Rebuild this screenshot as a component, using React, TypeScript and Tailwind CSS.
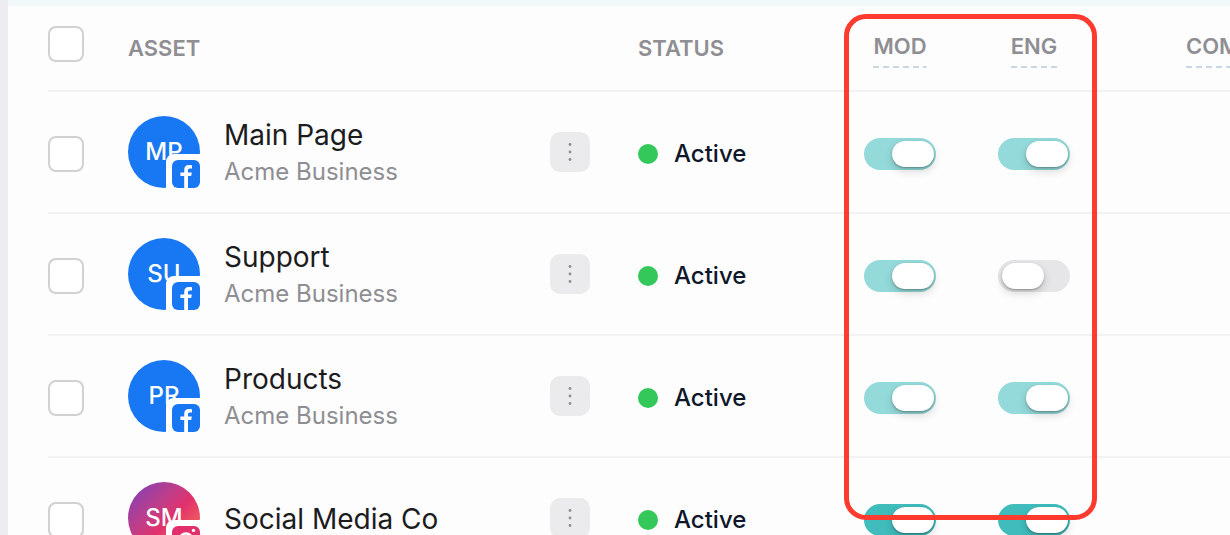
import { useState } from "react"
import type React from "react"

type Network = "facebook" | "instagram"

interface Asset {
  id: number
  initials: string
  name: string
  business?: string
  network: Network
  moderation: boolean
  engagement: boolean
  muted: boolean
}

const initialAssets: Asset[] = [
  { id: 1, initials: "MP", name: "Main Page", business: "Acme Business", network: "facebook", moderation: true, engagement: true, muted: true },
  { id: 2, initials: "SU", name: "Support", business: "Acme Business", network: "facebook", moderation: true, engagement: false, muted: true },
  { id: 3, initials: "PR", name: "Products", business: "Acme Business", network: "facebook", moderation: true, engagement: true, muted: true },
  { id: 4, initials: "SM", name: "Social Media Co", network: "instagram", moderation: true, engagement: true, muted: false },
]

const FacebookBadge = () => (
  <svg viewBox="0 0 28 28" className="size-7" aria-hidden="true">
    <rect width="28" height="28" rx="6" fill="#1877f2" />
    <path
      d="M12.2 28V16H8.4v-3.4h3.8V9.9C12.2 6.8 14 5 17 5c1.2 0 2.4.1 3 .2v3.4h-2.1c-1.4 0-1.9.7-1.9 1.8v2.2h3.8L19.2 16H16v12z"
      fill="#fff"
    />
  </svg>
)

const InstagramBadge = () => (
  <svg viewBox="0 0 28 28" className="size-7" aria-hidden="true">
    <rect width="28" height="28" rx="6" fill="#e1306c" />
    <circle cx="14" cy="14" r="6.5" fill="none" stroke="#fff" strokeWidth="2.6" />
    <circle cx="21.5" cy="4.4" r="1.7" fill="#fff" />
  </svg>
)

const Avatar: React.FC<{ initials: string; network: Network }> = ({ initials, network }) => (
  <div className="relative size-18 shrink-0">
    <div
      className={`flex size-18 items-center justify-center rounded-full text-2xl font-medium text-white ${
        network === "facebook" ? "bg-[#1877f2]" : "bg-linear-135 from-[#833ab4] from-5% via-[#e1306c] via-55% to-[#fd7a45]"
      }`}
    >
      {initials}
    </div>
    <div className="absolute right-0 bottom-0 rounded-tl-lg bg-white pt-1.5 pl-1.5">
      {network === "facebook" ? <FacebookBadge /> : <InstagramBadge />}
    </div>
  </div>
)

const Checkbox: React.FC<{ label: string }> = ({ label }) => (
  <input
    type="checkbox"
    aria-label={label}
    className="block size-9 appearance-none rounded-lg border-2 border-[#d1d1d3] bg-white checked:bg-[#40bcbc]"
  />
)

interface ToggleProps {
  label: string
  checked: boolean
  muted: boolean
  onChange: () => void
}

const Toggle: React.FC<ToggleProps> = ({ label, checked, muted, onChange }) => (
  <label className="relative mx-auto block h-8 w-18">
    <input
      type="checkbox"
      role="switch"
      aria-label={label}
      checked={checked}
      onChange={onChange}
      className={`peer block h-8 w-18 appearance-none rounded-full bg-[#e6e6e8] ${
        muted ? "checked:bg-[#94dada]" : "checked:bg-[#40bcbc]"
      }`}
    />
    <span className="pointer-events-none absolute top-[3px] left-1 h-[26px] w-[42px] rounded-full bg-white shadow-[0_1px_2px_rgba(0,0,0,0.3),0_4px_8px_rgba(0,0,0,0.16)] peer-checked:left-7" />
  </label>
)

const headText = "text-[22px] leading-7 font-semibold text-[#8e8e93]"
const dashed =
  "inline-block pb-2 bg-[repeating-linear-gradient(90deg,#c9d6e4_0_6px,transparent_6px_10px)] bg-[length:100%_2px] bg-bottom bg-no-repeat"

const App = () => {
  const [assets, setAssets] = useState(initialAssets)

  const toggle = (id: number, key: "moderation" | "engagement") => {
    setAssets((prev) => prev.map((a) => (a.id === id ? { ...a, [key]: !a[key] } : a)))
  }

  return (
    <div className="flex h-screen overflow-hidden bg-[#ececf1] pl-2 font-['Inter','Liberation_Sans',sans-serif]">
      <main className="min-w-0 flex-1 border-t-6 border-[#f0f8fa] bg-[#fdfdfd] pl-10">
        <div className="relative">
          <table className="w-full table-fixed border-collapse text-left">
            <colgroup>
              <col className="w-20" />
              <col />
              <col className="w-22" />
              <col className="w-[195px]" />
              <col className="w-[134px]" />
              <col className="w-[134px]" />
              <col className="w-[129px]" />
            </colgroup>
            <thead>
              <tr className="h-[85px] border-b-2 border-[#f2f2f3]">
                <th className="pb-2">
                  <Checkbox label="Select all assets" />
                </th>
                <th className={headText}>ASSET</th>
                <th />
                <th className={headText}>STATUS</th>
                <th className={`${headText} pt-1 text-center`}>
                  <span className={dashed}>MOD</span>
                </th>
                <th className={`${headText} pt-1 text-center`}>
                  <span className={dashed}>ENG</span>
                </th>
                <th className={`${headText} pt-1 pl-[85px] whitespace-nowrap`}>
                  <span className={dashed}>COM</span>
                </th>
              </tr>
            </thead>
            <tbody>
              {assets.map((asset) => (
                <tr key={asset.id} className="h-[122px] border-b-2 border-[#f2f2f3]">
                  <td className="pt-1">
                    <Checkbox label={`Select ${asset.name}`} />
                  </td>
                  <td>
                    <div className="flex items-center gap-6">
                      <Avatar initials={asset.initials} network={asset.network} />
                      <div className="min-w-0 pt-0.5">
                        <div className="truncate text-[28px] leading-[38px] text-[#1c1c1e]">{asset.name}</div>
                        {asset.business && (
                          <div className="truncate text-2xl leading-9 text-[#8e8e93]">{asset.business}</div>
                        )}
                      </div>
                    </div>
                  </td>
                  <td>
                    <button
                      type="button"
                      aria-label={`Options for ${asset.name}`}
                      className="flex size-10 items-center justify-center rounded-[10px] bg-[#ebebed]"
                    >
                      <svg viewBox="0 0 4 20" className="h-5 w-1" fill="#8e8e93" aria-hidden="true">
                        <circle cx="2" cy="2.5" r="1.4" />
                        <circle cx="2" cy="10" r="1.4" />
                        <circle cx="2" cy="17.5" r="1.4" />
                      </svg>
                    </button>
                  </td>
                  <td className="pt-1">
                    <div className="flex items-center gap-4 text-2xl font-medium text-[#0f172a]">
                      <span className="size-5 rounded-full bg-[#34c759]" />
                      Active
                    </div>
                  </td>
                  <td className="pt-1">
                    <Toggle
                      label={`Moderation for ${asset.name}`}
                      checked={asset.moderation}
                      muted={asset.muted}
                      onChange={() => toggle(asset.id, "moderation")}
                    />
                  </td>
                  <td className="pt-1">
                    <Toggle
                      label={`Engagement for ${asset.name}`}
                      checked={asset.engagement}
                      muted={asset.muted}
                      onChange={() => toggle(asset.id, "engagement")}
                    />
                  </td>
                  <td />
                </tr>
              ))}
            </tbody>
          </table>
          {/* callout around the MOD and ENG columns */}
          <div className="pointer-events-none absolute top-2 right-[133px] h-[506px] w-[253px] rounded-[22px] border-5 border-[#ff3b30]" />
        </div>
      </main>
    </div>
  )
}

export default App
